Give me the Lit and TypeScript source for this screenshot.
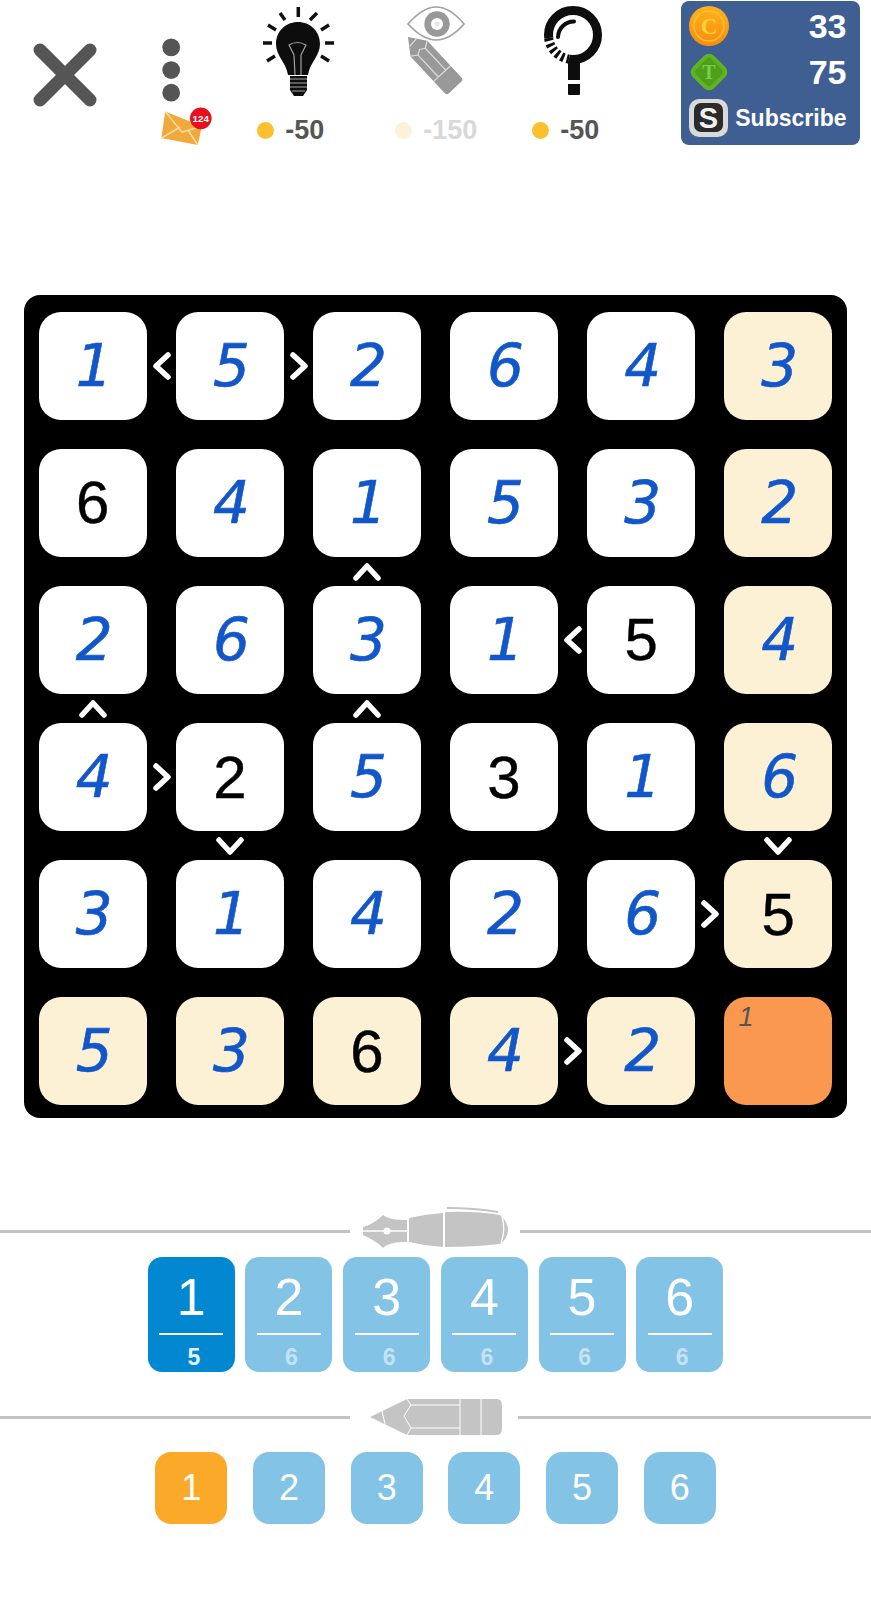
import { LitElement, html, css, svg } from 'lit';
import { customElement } from 'lit/decorators.js';
import { classMap } from 'lit/directives/class-map.js';

// digit grid, given digits are the black ones
const SOLUTION = [
  [1, 5, 2, 6, 4, 3],
  [6, 4, 1, 5, 3, 2],
  [2, 6, 3, 1, 5, 4],
  [4, 2, 5, 3, 1, 6],
  [3, 1, 4, 2, 6, 5],
  [5, 3, 6, 4, 2, 0],
];
const GIVEN = ['1,0', '2,4', '3,1', '3,3', '4,5', '5,2'];

// r,c -> chevron after the cell (left/right) or below the cell (up/down)
const SIGNS: Record<string, string> = {
  '0,0': 'left',
  '0,1': 'right',
  '1,2': 'up',
  '2,0': 'up',
  '2,2': 'up',
  '2,3': 'left',
  '3,0': 'right',
  '3,1': 'down',
  '3,5': 'down',
  '4,4': 'right',
  '5,3': 'right',
};

const PEN_COUNTS = [5, 6, 6, 6, 6, 6];

const closeIcon = svg`<path d="M7 7 L57 57 M57 7 L7 57" stroke="#555" stroke-width="13" stroke-linecap="round" fill="none"/>`;

const bulbIcon = svg`
  <g stroke="#111" stroke-width="3.500">
    <path d="M33 43 H42 M38 25 L46 30 M50 13 L55 20 M68.300 7 V17 M37 61 L45 56"/>
    <path d="M95 43 H104 M91 30 L99 25 M80 20 L87 13 M91 56 L99 61"/>
  </g>
  <path d="M68 22 C80 22 90 31 90 44 C90 56 80 62 78 75 L58 75 C56 62 46 56 46 44 C46 31 56 22 68 22 Z" fill="#0d0d0d"/>
  <path d="M65 75 L64 55 L59 45 Q67 40 76 45 L71 55 L71 75" stroke="#a0a0a0" stroke-width="1.200" fill="none"/>
  <path d="M60 76 H77 V90 L73 96 H64 L60 90 Z" fill="#0d0d0d"/>
  <path d="M60 79 H77 M60 83 H77 M60 87 H77 M62 91 H75" stroke="#a8a8a8" stroke-width="1"/>
`;

const eyeIcon = svg`
  <path d="M40 24 Q55 7 68 7 Q82 7 96 24 Q82 40 68 40 Q55 40 40 24 Z" fill="#fff" stroke="#a0a0a0" stroke-width="1.600"/>
  <circle cx="69" cy="24" r="12.700" fill="#999"/>
  <circle cx="69" cy="24" r="6" fill="#fff"/>
  <circle cx="69" cy="24" r="2.500" fill="#e4e4e4"/>
  <g transform="translate(40 37) rotate(47)">
    <path d="M0 0 L16 -11.500 H66 Q69 -11.500 69 -8 V8 Q69 11.500 66 11.500 H16 Z" fill="#999"/>
    <path d="M7 -5 L8 5 M16 -11 L20 -5 L17 0 L20 5 L16 11 M20 -5 H50 M20 5 H50 M50 -11.500 V11.500" stroke="#dcdcdc" stroke-width="1.200" fill="none"/>
  </g>
`;

const searchIcon = svg`
  <circle cx="68" cy="35" r="24.500" fill="none" stroke="#0d0d0d" stroke-width="9"/>
  <path d="M43.600 38 A24.500 24.500 0 0 0 64 59.200" fill="none" stroke="#fff" stroke-width="10"/>
  <path d="M43.600 38 A24.500 24.500 0 0 0 64 59.200" fill="none" stroke="#0d0d0d" stroke-width="9" stroke-dasharray="3 2.800"/>
  <path d="M53 37 A16 16 0 0 1 69 21.500" fill="none" stroke="#0d0d0d" stroke-width="4" stroke-linecap="round"/>
  <path d="M63 61 L75 59 V80 H63 Z M63 84 H75 V94 Q75 95 74 95 H64 Q63 95 63 94 Z" fill="#0d0d0d"/>
`;

const penIcon = svg`
  <path d="M13 21 C20 19 27 15 33 9 C38 13 46 14 57 14 V36 C46 36 38 37 33 42 C27 36 20 32 13 29 Z" fill="#c4c4c4"/>
  <path d="M13 25 H57" stroke="#fff" stroke-width="1.300"/>
  <circle cx="37" cy="25" r="3.500" fill="#fff"/>
  <path d="M59 12 Q76 8 93 7 V41 Q76 40 59 36 Z" fill="#c4c4c4"/>
  <path d="M95 6 Q125 5 150 9 Q158 16 158 24 Q158 32 150 38 Q125 41 95 41 Z" fill="#c4c4c4"/>
  <path d="M97 2 Q125 2 148 6" stroke="#c4c4c4" stroke-width="2" fill="none"/>
  <path d="M152 10 Q156 24 151 37" stroke="#fff" stroke-width="1.300" fill="none"/>
`;

const pencilIcon = svg`
  <path d="M20 25 L57 7 H147 Q152 7 152 14 V36 Q152 43 147 43 H57 Z" fill="#c4c4c4"/>
  <path d="M32 19 L35 32 M57 7 L61 13 L54 24 L61 36 L57 43 M61 13 H110 M61 36 H110 M110 7 V43 M131 7 V43" stroke="#fff" stroke-width="1" fill="none"/>
`;

@customElement('app-root')
export class AppRoot extends LitElement {
  static styles = css`
    :host {
      display: block;
      width: 871px;
      height: 1600px;
      background: #fff;
      font-family: 'Liberation Sans', Arial, sans-serif;
      overflow: hidden;
    }
    .top {
      display: flex;
      height: 145px;
      padding: 1px 0 0 33px;
      box-sizing: border-box;
    }
    .close {
      width: 64px;
      height: 64px;
      margin-top: 42px;
    }
    .menu {
      width: 75px;
      margin-left: 58px;
      display: flex;
      flex-direction: column;
    }
    .menu svg {
      display: block;
      width: 60px;
      height: 146px;
    }
    .tool {
      width: 137.5px;
      display: flex;
      flex-direction: column;
      align-items: center;
    }
    .tool svg {
      display: block;
      width: 137px;
      height: 100px;
      margin-top: -1px;
    }
    .cost {
      display: flex;
      align-items: center;
      gap: 11px;
      margin: 15px 16px 0 0;
      font-size: 27px;
      font-weight: 700;
      line-height: 30px;
      color: #555;
    }
    .cost::before {
      content: '';
      width: 17px;
      height: 17px;
      border-radius: 50%;
      background: #fbc02d;
    }
    .cost.off {
      margin-right: 0;
      color: #d8d8d8;
    }
    .cost.off::before {
      background: #fbf2d9;
    }
    .wallet {
      width: 179px;
      height: 144px;
      margin-left: 38px;
      padding: 2px 13px 0 8px;
      box-sizing: border-box;
      background: #3f5e92;
      border-radius: 8px;
      color: #fff;
      font-weight: 700;
    }
    .wallet-row {
      display: flex;
      align-items: center;
      justify-content: space-between;
      height: 46px;
      font-size: 34px;
    }
    .wallet-row svg {
      display: block;
      width: 40px;
      height: 40px;
      flex: none;
    }
    .wallet-row.sub {
      font-size: 23px;
      gap: 6px;
    }
    .board {
      width: 823px;
      height: 823px;
      margin: 150px 0 0 24px;
      padding: 17px 15px 13px;
      box-sizing: border-box;
      background: #000;
      border-radius: 16px;
      display: grid;
      grid-template-columns: repeat(6, 107.5px);
      grid-template-rows: repeat(6, 107.5px);
      gap: 29.6px;
    }
    .cell {
      position: relative;
      display: flex;
      align-items: center;
      justify-content: center;
      background: #fff;
      border-radius: 22px;
      font-size: 60px;
      color: #000;
      -webkit-text-stroke: 0.4px #000;
    }
    .cell.cream {
      background: #fdf1d5;
    }
    .cell.current {
      background: #fa9850;
    }
    .hand {
      padding-left: 3px;
      font-family: 'DejaVu Sans', sans-serif;
      font-size: 58px;
      color: #1257c9;
      font-style: italic;
      -webkit-text-stroke: 0.6px #1257c9;
    }
    .note {
      position: absolute;
      left: 14px;
      top: 5px;
      font-size: 27px;
      font-style: italic;
      color: #555;
      -webkit-text-stroke: 0;
    }
    .sign {
      position: absolute;
      width: 30px;
      height: 30px;
    }
    .sign path {
      fill: none;
      stroke: #fff;
      stroke-width: 5.5;
      stroke-linecap: round;
      stroke-linejoin: round;
    }
    .sign.left,
    .sign.right {
      left: 100%;
      top: calc(50% - 15px);
    }
    .sign.up,
    .sign.down {
      top: 100%;
      left: calc(50% - 15px);
    }
    .sign.left {
      transform: rotate(180deg);
    }
    .sign.up {
      transform: rotate(-90deg);
    }
    .sign.down {
      transform: rotate(90deg);
    }
    .rule {
      display: flex;
      align-items: center;
      height: 50px;
    }
    .rule i {
      flex: 1;
      height: 3px;
      background: #c2c2c2;
    }
    .rule i:first-child {
      flex: none;
      width: 350px;
    }
    .rule svg {
      display: block;
      height: 50px;
      flex: none;
    }
    .rule.pen {
      margin-top: 88px;
    }
    .rule.pen svg {
      width: 170px;
    }
    .rule.pencil {
      margin-top: 20px;
    }
    .rule.pencil svg {
      width: 168px;
    }
    .keys {
      display: flex;
      justify-content: center;
      color: #fff;
    }
    .keys.big {
      gap: 10.7px;
      margin-top: 1px;
    }
    .keys.small {
      gap: 25.7px;
      margin-top: 10px;
    }
    .key {
      background: #82c3e6;
      text-align: center;
      flex: none;
    }
    .keys.big .key {
      width: 87px;
      height: 115px;
      border-radius: 14px;
      box-sizing: border-box;
      padding-top: 11px;
    }
    .keys.big .key.on {
      background: #0288d1;
    }
    .key b {
      display: block;
      font-weight: 400;
      font-size: 52px;
      line-height: 58px;
    }
    .key hr {
      width: 64px;
      height: 2px;
      margin: 7px auto 0;
      border: 0;
      background: #fff;
    }
    .key small {
      display: block;
      margin-top: 10px;
      padding-left: 5px;
      font-size: 23px;
      line-height: 24px;
      font-weight: 700;
      color: #c6e2f2;
    }
    .key.on small {
      color: #e3f2fb;
    }
    .keys.small .key {
      width: 72px;
      height: 72px;
      border-radius: 16px;
      font-size: 36px;
      line-height: 72px;
    }
    .keys.small .key.on {
      background: #fba928;
    }
  `;

  private renderCell(value: number, r: number, c: number) {
    const key = `${r},${c}`;
    const given = GIVEN.includes(key);
    const sign = SIGNS[key];
    const classes = {
      cell: true,
      cream: r === 5 || c === 5,
      current: value === 0,
    };
    return html`
      <div class=${classMap(classes)}>
        ${value === 0
          ? html`<span class="note">1</span>`
          : html`<span class=${given ? '' : 'hand'}>${value}</span>`}
        ${sign
          ? html`<svg class="sign ${sign}" viewBox="0 0 30 30"><path d="M9 4 L21 15 L9 26" /></svg>`
          : ''}
      </div>
    `;
  }

  render() {
    return html`
      <div class="top">
        <svg class="close" viewBox="0 0 64 64">${closeIcon}</svg>
        <div class="menu">
          <svg viewBox="0 0 60 146">
            <circle cx="16" cy="47" r="9" fill="#555" />
            <circle cx="16" cy="70" r="9" fill="#555" />
            <circle cx="16" cy="93" r="9" fill="#555" />
            <path d="M10 112 L47 127 L43 146 L6 139 Z" fill="#f2a93b" />
            <path d="M10 112 L27 133 L47 127 M6 139 L25 128 M43 146 L33 131" stroke="#f8e1a5" stroke-width="1.500" fill="none" />
            <circle cx="46" cy="119" r="11" fill="#e8101e" />
            <text x="46" y="123" text-anchor="middle" font-size="10" font-weight="700" fill="#fff">124</text>
          </svg>
        </div>
        <div class="tool">
          <svg viewBox="0 0 137 100">${bulbIcon}</svg>
          <div class="cost">-50</div>
        </div>
        <div class="tool">
          <svg viewBox="0 0 137 100">${eyeIcon}</svg>
          <div class="cost off">-150</div>
        </div>
        <div class="tool">
          <svg viewBox="0 0 137 100">${searchIcon}</svg>
          <div class="cost">-50</div>
        </div>
        <div class="wallet">
          <div class="wallet-row">
            <svg viewBox="0 0 40 40">
              <defs>
                <linearGradient id="coin" x1="0" y1="0" x2="0" y2="1">
                  <stop offset="0" stop-color="#ffb21c" />
                  <stop offset="1" stop-color="#f78c10" />
                </linearGradient>
              </defs>
              <circle cx="20" cy="20" r="20" fill="url(#coin)" />
              <circle cx="20" cy="20" r="15" fill="none" stroke="#fdc02f" stroke-width="1.500" />
              <text x="20" y="28" text-anchor="middle" font-family="Liberation Serif" font-size="23" font-weight="700" fill="#ffd23c">C</text>
            </svg>
            33
          </div>
          <div class="wallet-row">
            <svg viewBox="0 0 40 40">
              <rect x="5" y="5" width="30" height="30" rx="7" transform="rotate(45 20 20)" fill="#5fb51f" />
              <rect x="9" y="9" width="22" height="22" rx="4" transform="rotate(45 20 20)" fill="#4f9f1a" />
              <text x="20" y="27" text-anchor="middle" font-family="Liberation Serif" font-size="20" font-weight="700" fill="#74cf4c">T</text>
            </svg>
            75
          </div>
          <div class="wallet-row sub">
            <svg viewBox="0 0 40 40">
              <rect x="0" y="1" width="39" height="38" rx="10" fill="#d9d9d9" />
              <rect x="5" y="5" width="29" height="29" rx="7" fill="#2b2b2b" />
              <text x="19.500" y="30" text-anchor="middle" font-family="Liberation Sans" font-size="29" font-weight="700" fill="#f2f2f2">S</text>
            </svg>
            Subscribe
          </div>
        </div>
      </div>

      <div class="board">
        ${SOLUTION.map((row, r) => row.map((v, c) => this.renderCell(v, r, c)))}
      </div>

      <div class="rule pen">
        <i></i>
        <svg viewBox="0 0 170 50">${penIcon}</svg>
        <i></i>
      </div>
      <div class="keys big">
        ${PEN_COUNTS.map(
          (count, i) => html`
            <div class="key ${i === 0 ? 'on' : ''}">
              <b>${i + 1}</b>
              <hr />
              <small>${count}</small>
            </div>
          `,
        )}
      </div>

      <div class="rule pencil">
        <i></i>
        <svg viewBox="0 0 168 50" preserveAspectRatio="xMinYMid">${pencilIcon}</svg>
        <i></i>
      </div>
      <div class="keys small">
        ${PEN_COUNTS.map(
          (_, i) => html`<div class="key ${i === 0 ? 'on' : ''}">${i + 1}</div>`,
        )}
      </div>
    `;
  }
}
